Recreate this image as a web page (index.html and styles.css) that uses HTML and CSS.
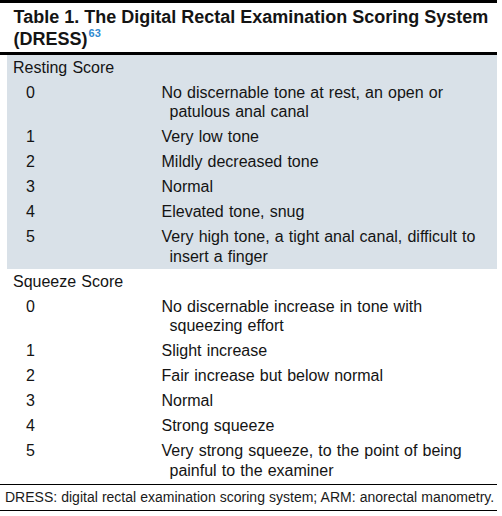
FILE: index.html
```html
<!DOCTYPE html>
<html lang="en">
<head>
<meta charset="utf-8">
<title>Table 1. DRESS</title>
<link rel="stylesheet" href="styles.css">
</head>
<body>
<div class="table">
  <div class="title">Table 1. The Digital Rectal Examination Scoring System (DRESS)<sup class="ref">63</sup></div>
  <div class="section shaded">
    <div class="cat">Resting Score</div>
    <div class="row"><span class="num">0</span><span class="desc">No discernable tone at rest, an open or</span><span class="desc cont">patulous anal canal</span></div>
    <div class="row"><span class="num">1</span><span class="desc">Very low tone</span></div>
    <div class="row"><span class="num">2</span><span class="desc">Mildly decreased tone</span></div>
    <div class="row"><span class="num">3</span><span class="desc">Normal</span></div>
    <div class="row"><span class="num">4</span><span class="desc">Elevated tone, snug</span></div>
    <div class="row"><span class="num">5</span><span class="desc">Very high tone, a tight anal canal, difficult to</span><span class="desc cont">insert a finger</span></div>
  </div>
  <div class="section">
    <div class="cat">Squeeze Score</div>
    <div class="row"><span class="num">0</span><span class="desc">No discernable increase in tone with</span><span class="desc cont">squeezing effort</span></div>
    <div class="row"><span class="num">1</span><span class="desc">Slight increase</span></div>
    <div class="row"><span class="num">2</span><span class="desc">Fair increase but below normal</span></div>
    <div class="row"><span class="num">3</span><span class="desc">Normal</span></div>
    <div class="row"><span class="num">4</span><span class="desc">Strong squeeze</span></div>
    <div class="row"><span class="num">5</span><span class="desc">Very strong squeeze, to the point of being</span><span class="desc cont">painful to the examiner</span></div>
  </div>
  <div class="foot">DRESS: digital rectal examination scoring system; ARM: anorectal manometry.</div>
</div>
</body>
</html>
```
FILE: styles.css
```css
html, body {
  margin: 0;
  padding: 0;
  background: #ffffff;
}

body {
  font-family: "Liberation Sans", Arial, sans-serif;
  color: #141414;
}

.table {
  width: 497px;
  border-top: 3px solid #000;
}

.title {
  font-size: 18px;
  font-weight: bold;
  line-height: 22px;
  padding: 3px 0 2px 13.5px;
  border-bottom: 3px solid #000;
}

.ref {
  font-size: 11px;
  line-height: 0;
  vertical-align: 8px;
  margin-left: 1px;
  color: #2f8ad0;
}

.section {
  margin-left: 7px;
  width: 490px;
  font-size: 16px;
  line-height: 19.5px;
  word-spacing: 0.7px;
}

.shaded {
  background: #d9e1e8;
}

.cat {
  padding: 2.75px 0 2.75px 6px;
}

.row {
  display: grid;
  grid-template-columns: 135.5px 1fr;
  padding: 2.75px 0 2.75px 19px;
}

.desc {
  grid-column: 2;
  white-space: nowrap;
}

.cont {
  margin-left: 8px;
}

.foot {
  margin-top: 1px;
  font-size: 14px;
  line-height: 16px;
  word-spacing: 0.2px;
  padding: 4px 0 5px 5px;
  border-top: 1px solid #000;
  border-bottom: 1px solid #000;
  color: #1a1a1a;
}
```
